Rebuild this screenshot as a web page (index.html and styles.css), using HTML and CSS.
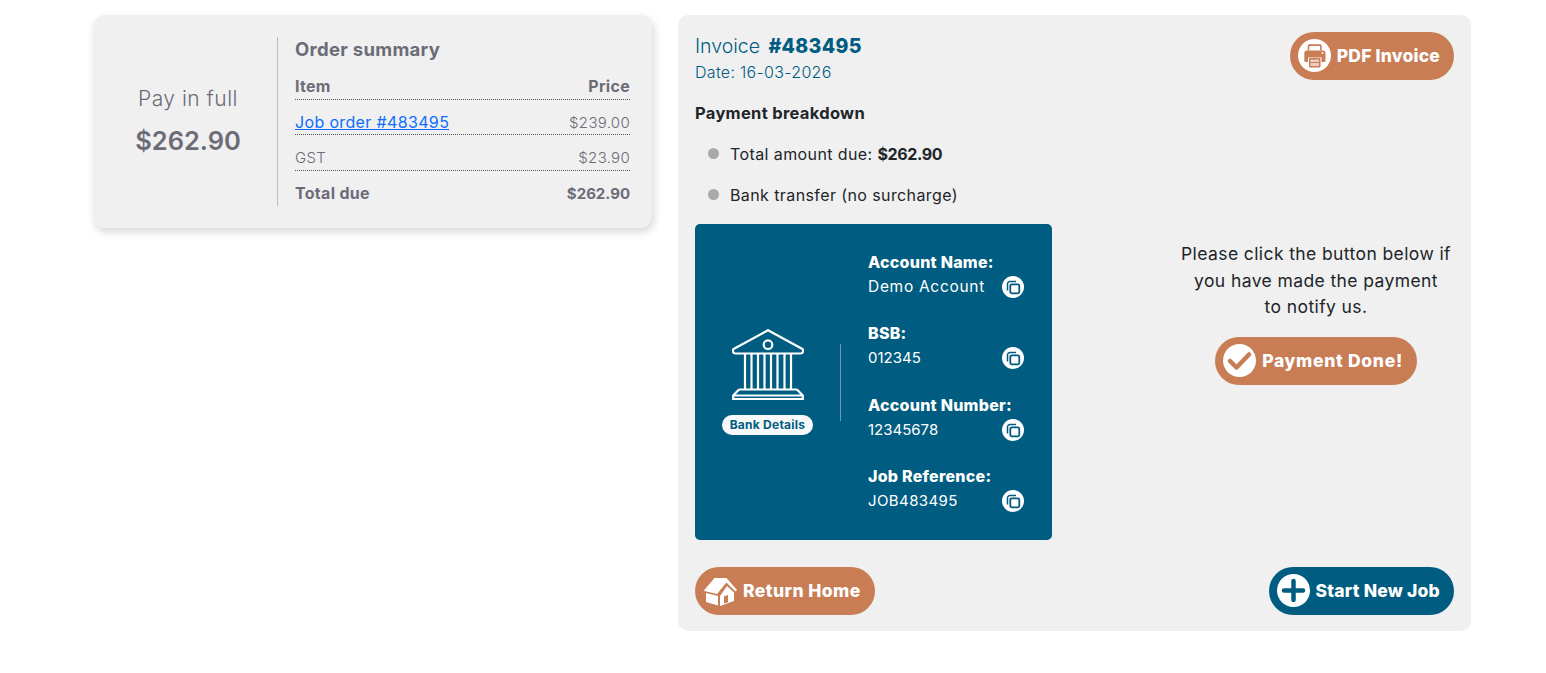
FILE: index.html
```html
<!DOCTYPE html>
<html lang="en">
<head>
    <meta charset="UTF-8">
    <title>Invoice #483495</title>
    <link rel="stylesheet" href="styles.css">
</head>
<body>
    <div class="page">
        <div class="summary-card">
            <div class="pay-full">
                <div class="pay-label">Pay in full</div>
                <div class="pay-amount">$262.90</div>
            </div>
            <div class="order">
                <h3 class="order-title">Order summary</h3>
                <div class="order-row order-head"><span>Item</span><span>Price</span></div>
                <div class="order-row"><a href="#">Job order #483495</a><span>$239.00</span></div>
                <div class="order-row order-gst"><span>GST</span><span>$23.90</span></div>
                <div class="order-row order-total"><span class="order-total-label">Total due</span><span class="order-sum">$262.90</span></div>
            </div>
        </div>

        <div class="invoice-card">
            <div class="invoice-head">
                <div>
                    <div class="invoice-no">Invoice <strong>#483495</strong></div>
                    <div class="invoice-date">Date: 16-03-2026</div>
                </div>
                <a class="btn" href="#">
                    <span class="btn-icon">
                        <svg viewBox="0 0 33 33" width="33" height="33">
                            <path d="M9.700 11.500V6.800a1.500 1.500 0 0 1 1.500-1.500h11a1.500 1.500 0 0 1 1.500 1.500v4.700h-1.600V6.900H11.300v4.600z" fill="#c87d55"/>
                            <path d="M8.500 11.500h16.500a2.500 2.500 0 0 1 2.500 2.500v7.500a1.500 1.500 0 0 1-1.500 1.500h-2.500v-4.500H10V23H7.800a1.500 1.500 0 0 1-1.500-1.500V14a2.500 2.500 0 0 1 2.200-2.500z" fill="#c87d55"/>
                            <circle cx="24.500" cy="14" r="0.900" fill="#fff"/>
                            <rect x="11" y="19" width="11.500" height="9.500" rx="1" fill="#c87d55"/>
                            <rect x="12.500" y="20.500" width="8.500" height="6.500" fill="#eccfbf"/>
                            <rect x="12.500" y="23" width="8.500" height="1" fill="#c87d55"/>
                        </svg>
                    </span>
                    PDF Invoice
                </a>
            </div>

            <div class="breakdown-title">Payment breakdown</div>
            <ul class="breakdown">
                <li>Total amount due: <strong>$262.90</strong></li>
                <li>Bank transfer (no surcharge)</li>
            </ul>

            <div class="pay-row">
                <div class="bank-box">
                    <div class="bank-side">
                        <svg class="bank-icon" viewBox="0 0 72 71" width="72" height="71" fill="none" stroke="#fff" stroke-width="2.200">
                            <path d="M36 1.200 69.500 19.500a2.600 2.600 0 0 1-1.200 5H3.700a2.600 2.600 0 0 1-1.200-5z" stroke-linejoin="round"/>
                            <circle cx="36" cy="15.700" r="4.300"/>
                            <path d="M13 24.500v35.500M19.500 24.500v35.500M26 24.500v35.500M32.500 24.500v35.500M39 24.500v35.500M45.500 24.500v35.500M52.500 24.500v35.500M59 24.500v35.500"/>
                            <path d="M7 60.500h58M7 60.500 1.200 66.500v3.500h69.600v-3.500L65 60.500M1.200 66.500h69.600"/>
                        </svg>
                        <span class="bank-pill">Bank Details</span>
                    </div>
                    <div class="bank-divider"></div>
                    <div class="bank-details">
                        <div class="bank-item">
                            <div class="bank-label">Account Name:</div>
                            <div class="bank-value"><span class="bank-name">Demo Account</span><svg class="copy" viewBox="0 0 22 22" width="22" height="22"><circle cx="11" cy="11" r="11" fill="#fff"/><path d="M5.500 14.500V8a2.500 2.500 0 0 1 2.500-2.500h6" fill="none" stroke="#005c80" stroke-width="1.500"/><rect x="8.300" y="8.300" width="9" height="9" rx="1.500" fill="none" stroke="#005c80" stroke-width="1.800"/></svg></div>
                        </div>
                        <div class="bank-item">
                            <div class="bank-label">BSB:</div>
                            <div class="bank-value"><span>012345</span><svg class="copy" viewBox="0 0 22 22" width="22" height="22"><circle cx="11" cy="11" r="11" fill="#fff"/><path d="M5.500 14.500V8a2.500 2.500 0 0 1 2.500-2.500h6" fill="none" stroke="#005c80" stroke-width="1.500"/><rect x="8.300" y="8.300" width="9" height="9" rx="1.500" fill="none" stroke="#005c80" stroke-width="1.800"/></svg></div>
                        </div>
                        <div class="bank-item">
                            <div class="bank-label">Account Number:</div>
                            <div class="bank-value"><span>12345678</span><svg class="copy" viewBox="0 0 22 22" width="22" height="22"><circle cx="11" cy="11" r="11" fill="#fff"/><path d="M5.500 14.500V8a2.500 2.500 0 0 1 2.500-2.500h6" fill="none" stroke="#005c80" stroke-width="1.500"/><rect x="8.300" y="8.300" width="9" height="9" rx="1.500" fill="none" stroke="#005c80" stroke-width="1.800"/></svg></div>
                        </div>
                        <div class="bank-item">
                            <div class="bank-label">Job Reference:</div>
                            <div class="bank-value"><span class="bank-ref">JOB483495</span><svg class="copy" viewBox="0 0 22 22" width="22" height="22"><circle cx="11" cy="11" r="11" fill="#fff"/><path d="M5.500 14.500V8a2.500 2.500 0 0 1 2.500-2.500h6" fill="none" stroke="#005c80" stroke-width="1.500"/><rect x="8.300" y="8.300" width="9" height="9" rx="1.500" fill="none" stroke="#005c80" stroke-width="1.800"/></svg></div>
                        </div>
                    </div>
                </div>
                <div class="notify">
                    <p>Please click the button below if<br>you have made the payment<br>to notify us.</p>
                    <a class="btn btn-done" href="#">
                        <span class="btn-icon">
                            <svg viewBox="0 0 33 33" width="33" height="33"><path d="M7 17l6.500 6.500L26 10.500" fill="none" stroke="#c87d55" stroke-width="4.500" stroke-linecap="round" stroke-linejoin="round"/></svg>
                        </span>
                        Payment Done!
                    </a>
                </div>
            </div>

            <div class="invoice-foot">
                <a class="btn btn-home" href="#">
                    <svg class="home-icon" viewBox="0 0 34 30" width="34" height="30">
                        <path d="M1.300 14 11.500 2H23.500L34 14 32.500 15.500 23.500 6.500 14 18 1.300 15z" fill="#fff"/>
                        <path d="M3 17 15 20V29.500L3 26z" fill="#fff"/>
                        <path d="M17 20 24 10 31 16.500V25L17 30zM21 27.500l4-1.200V19l-4 1.200z" fill="#fff" fill-rule="evenodd"/>
                    </svg>
                    Return Home
                </a>
                <a class="btn btn-teal" href="#">
                    <span class="btn-icon">
                        <svg viewBox="0 0 33 33" width="33" height="33"><path d="M16.500 7v19M7 16.500h19" fill="none" stroke="#005c80" stroke-width="4.500" stroke-linecap="round"/></svg>
                    </span>
                    Start New Job
                </a>
            </div>
        </div>
    </div>
</body>
</html>
```

FILE: styles.css
```css
body {
    margin: 0;
    background: #fff;
    font-family: Inter, "Liberation Sans", sans-serif;
    color: #212529;
}
.page {
    display: flex;
    align-items: flex-start;
    gap: 26px;
    width: 1378px;
    margin-left: 93px;
    padding-top: 15px;
}
strong {
    font-weight: 700;
}

/* left card */
.summary-card {
    display: flex;
    width: 559px;
    box-sizing: border-box;
    padding: 22px 22px 22px 0;
    background: #f0f0f0;
    border-radius: 12px;
    box-shadow: 2px 4px 8px rgba(0, 0, 0, 0.16);
    color: #6c6c78;
}
.pay-full {
    width: 178px;
    padding-left: 6px;
    border-right: 1px solid #bdbdbd;
    display: flex;
    flex-direction: column;
    align-items: center;
    justify-content: center;
}
.pay-label {
    font-size: 21px;
    font-weight: 300;
    line-height: 30px;
    letter-spacing: 0.5px;
    margin-bottom: 9px;
}
.pay-amount {
    font-size: 25.5px;
    font-weight: 600;
    line-height: 36px;
}
.order {
    flex: 1;
    margin-left: 17px;
}
.order-title {
    margin: 0;
    padding-bottom: 2.5px;
    font-size: 18.5px;
    font-weight: 700;
    letter-spacing: 0.3px;
    line-height: 25px;
}
.order-row {
    display: flex;
    justify-content: space-between;
    padding: 12px 0 0;
    line-height: 22px;
    font-size: 15px;
    font-weight: 300;
    letter-spacing: 0.3px;
    border-bottom: 1px dotted #555;
}
.order-row a {
    margin-top: -1px;
    color: #0d6efd;
    font-size: 16px;
    font-weight: 400;
    letter-spacing: 0.35px;
}
.order-head {
    padding: 10px 0 2.5px;
    font-weight: 700;
    font-size: 16px;
}
.order-gst {
    padding-bottom: 1px;
}
.order-total {
    padding: 12px 0 1px;
    font-size: 16px;
    font-weight: 700;
    border-bottom: none;
}
.order-total-label {
    margin-top: -1px;
}
.order-sum {
    font-size: 15px;
    letter-spacing: 0;
}

/* right card */
.invoice-card {
    width: 793px;
    box-sizing: border-box;
    padding: 17px 17px 16px;
    background: #f0f0f0;
    border-radius: 10px;
}
.invoice-head {
    display: flex;
    justify-content: space-between;
    align-items: flex-start;
}
.invoice-no {
    font-size: 19.5px;
    line-height: 28px;
    font-weight: 300;
    word-spacing: 3px;
    color: #005c80;
}
.invoice-no strong {
    font-weight: 800;
    letter-spacing: 0.3px;
}
.invoice-date {
    padding-bottom: 1px;
    font-size: 16px;
    line-height: 24px;
    font-weight: 300;
    letter-spacing: 0.3px;
    color: #005c80;
}
.breakdown-title {
    margin-top: 18px;
    padding-bottom: 2px;
    font-size: 16.5px;
    font-weight: 700;
    letter-spacing: 0.3px;
    line-height: 20px;
}
.breakdown {
    list-style: none;
    margin: 17px 0;
    padding: 0;
}
.breakdown li {
    position: relative;
    padding-left: 35px;
    margin-top: 17px;
    font-size: 16px;
    line-height: 24px;
    letter-spacing: 0.4px;
}
.breakdown li:first-child {
    margin-top: 0;
}
.breakdown li strong {
    letter-spacing: -0.4px;
}
.breakdown li::before {
    content: "";
    position: absolute;
    left: 13px;
    top: 6px;
    width: 11px;
    height: 11px;
    border-radius: 50%;
    background: #a9a9a9;
}

.pay-row {
    display: flex;
    justify-content: space-between;
    align-items: flex-start;
}
.bank-box {
    display: flex;
    align-items: center;
    width: 357px;
    height: 316px;
    background: #005c80;
    border-radius: 5px;
    color: #fff;
}
.bank-side {
    width: 145px;
    display: flex;
    flex-direction: column;
    align-items: center;
}
.bank-icon {
    display: block;
}
.bank-pill {
    margin-top: 15px;
    padding: 0 8px 1px;
    background: #f8f9fa;
    border-radius: 10px;
    color: #005c80;
    font-size: 12px;
    font-weight: 700;
    letter-spacing: 0.25px;
    line-height: 19px;
}
.bank-divider {
    width: 1px;
    height: 77px;
    background: rgba(255, 255, 255, 0.4);
}
.bank-details {
    flex: 1;
    display: flex;
    flex-direction: column;
    gap: 23.5px;
    padding: 0 28px 0 27px;
}
.bank-label {
    padding-bottom: 2px;
    font-size: 16px;
    font-weight: 800;
    letter-spacing: 0.25px;
    line-height: 22px;
}
.bank-value {
    display: flex;
    justify-content: space-between;
    align-items: center;
    height: 24px;
    font-size: 15px;
}
.bank-value span {
    margin-bottom: 1px;
}
.bank-name {
    font-size: 15.5px;
    letter-spacing: 0.7px;
}
.bank-ref {
    letter-spacing: 0.4px;
}
.copy {
    display: block;
}
.notify {
    width: 276px;
    padding-top: 17px;
    text-align: center;
}
.notify p {
    margin: 0 0 16.5px;
    font-size: 17.5px;
    line-height: 26.5px;
    letter-spacing: 0.4px;
}

/* buttons */
.btn {
    display: inline-flex;
    align-items: center;
    gap: 6px;
    height: 48px;
    box-sizing: border-box;
    padding: 0 14px 1px 8px;
    border-radius: 24px;
    background: #c87d55;
    color: #fff;
    font-size: 17.5px;
    font-weight: 800;
    letter-spacing: 0.2px;
    text-decoration: none;
}
.btn-done {
    letter-spacing: 0.7px;
}
.btn-home {
    letter-spacing: 0.45px;
}
.btn-teal {
    background: #005c80;
}
.btn-icon {
    width: 33px;
    height: 33px;
    border-radius: 50%;
    background: #fff;
}
.btn-icon svg, .home-icon {
    display: block;
}
.invoice-foot {
    display: flex;
    justify-content: space-between;
    margin-top: 27px;
}
```
